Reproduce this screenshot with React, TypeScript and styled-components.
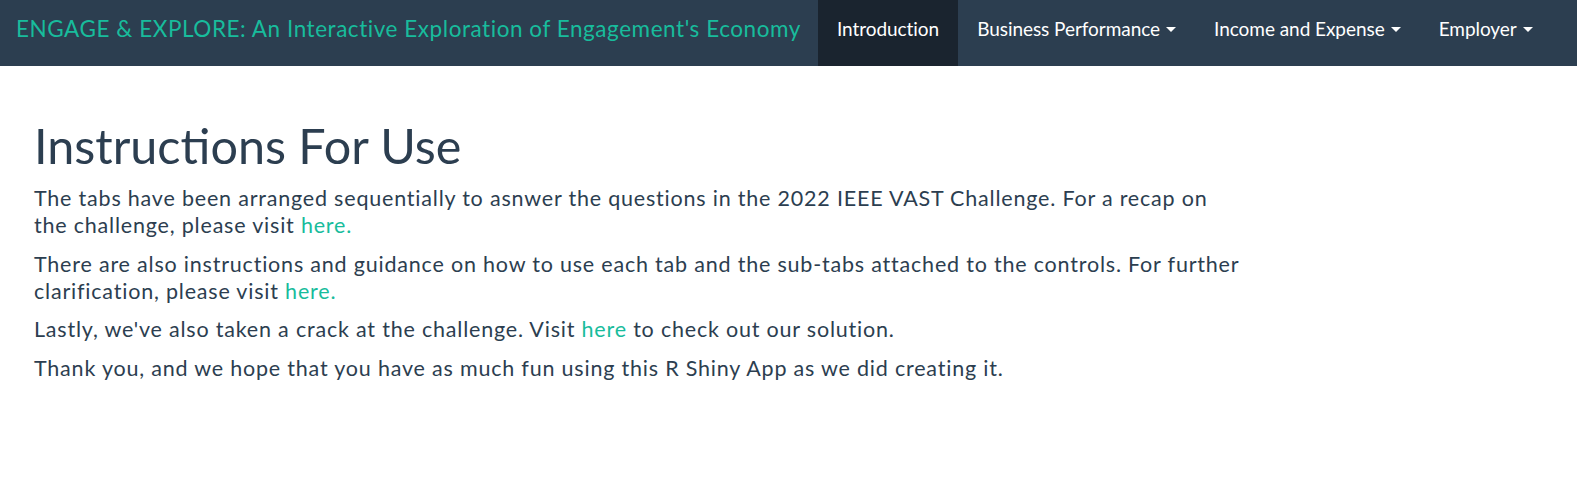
import React from "react";
import styled, { createGlobalStyle } from "styled-components";

const GlobalStyle = createGlobalStyle`
  html, body { margin: 0; padding: 0; background: #ffffff; }
  body {
    font-family: Lato, "Open Sans", "Liberation Sans", sans-serif;
    color: #2c3e50;
    -webkit-font-smoothing: antialiased;
  }
`;

const Page = styled.div`
  display: flex;
  flex-direction: column;
  min-height: 502px;
`;

const Navbar = styled.nav`
  display: flex;
  align-items: stretch;
  height: 66px;
  background: #2c3e50;
  padding: 0 16px;
`;

const Brand = styled.a`
  display: flex;
  align-items: center;
  padding: 0 17px 10px 0;
  font-size: 22.5px;
  letter-spacing: 0.55px;
  color: #18bc9c;
  text-decoration: none;
  white-space: nowrap;
`;

const NavList = styled.ul`
  display: flex;
  list-style: none;
  margin: 0;
  padding: 0;
`;

const NavItem = styled.li<{ $active?: boolean }>`
  display: flex;
  align-items: center;
  padding: 0 19px 10px;
  font-size: 19px;
  letter-spacing: -0.05px;
  color: #ffffff;
  background: ${(p) => (p.$active ? "#1a242f" : "transparent")};
  white-space: nowrap;
  cursor: pointer;
`;

const Caret = styled.span`
  display: inline-block;
  width: 0;
  height: 0;
  margin-left: 6px;
  margin-top: 3px;
  border-top: 5px solid #ffffff;
  border-left: 5px solid transparent;
  border-right: 5px solid transparent;
`;

const Content = styled.main`
  padding: 53px 34px 0;
  width: 1209px;
`;

const Title = styled.h1`
  margin: 0 0 13px;
  font-size: 48.5px;
  font-weight: 400;
  line-height: 1.1;
  color: #2c3e50;
`;

const Para = styled.p`
  margin: 0 0 11.5px;
  font-size: 21.5px;
  letter-spacing: 0.8px;
  line-height: 27px;
`;

const Link = styled.a`
  display: inline-block;
  line-height: 27px;
  color: #18bc9c;
  text-decoration: none;
`;

export default function App() {
  return (
    <Page>
      <GlobalStyle />
      <Navbar>
        <Brand href="#">ENGAGE &amp; EXPLORE: An Interactive Exploration of Engagement's Economy</Brand>
        <NavList>
          <NavItem $active>Introduction</NavItem>
          <NavItem>
            Business Performance
            <Caret />
          </NavItem>
          <NavItem>
            Income and Expense
            <Caret />
          </NavItem>
          <NavItem>
            Employer
            <Caret />
          </NavItem>
        </NavList>
      </Navbar>
      <Content>
        <Title>Instructions For Use</Title>
        <Para>
          {"The tabs have been arranged sequentially to asnwer the questions in the 2022 IEEE VAST Challenge. For a recap on "}
          {"the challenge, please visit "}
          <Link href="#">here.</Link>
        </Para>
        <Para>
          {"There are also instructions and guidance on how to use each tab and the sub-tabs attached to the controls. For further "}
          {"clarification, please visit "}
          <Link href="#">here.</Link>
        </Para>
        <Para>
          Lastly, we've also taken a crack at the challenge. Visit <Link href="#">here</Link> to check out our solution.
        </Para>
        <Para>Thank you, and we hope that you have as much fun using this R Shiny App as we did creating it.</Para>
      </Content>
    </Page>
  );
}
